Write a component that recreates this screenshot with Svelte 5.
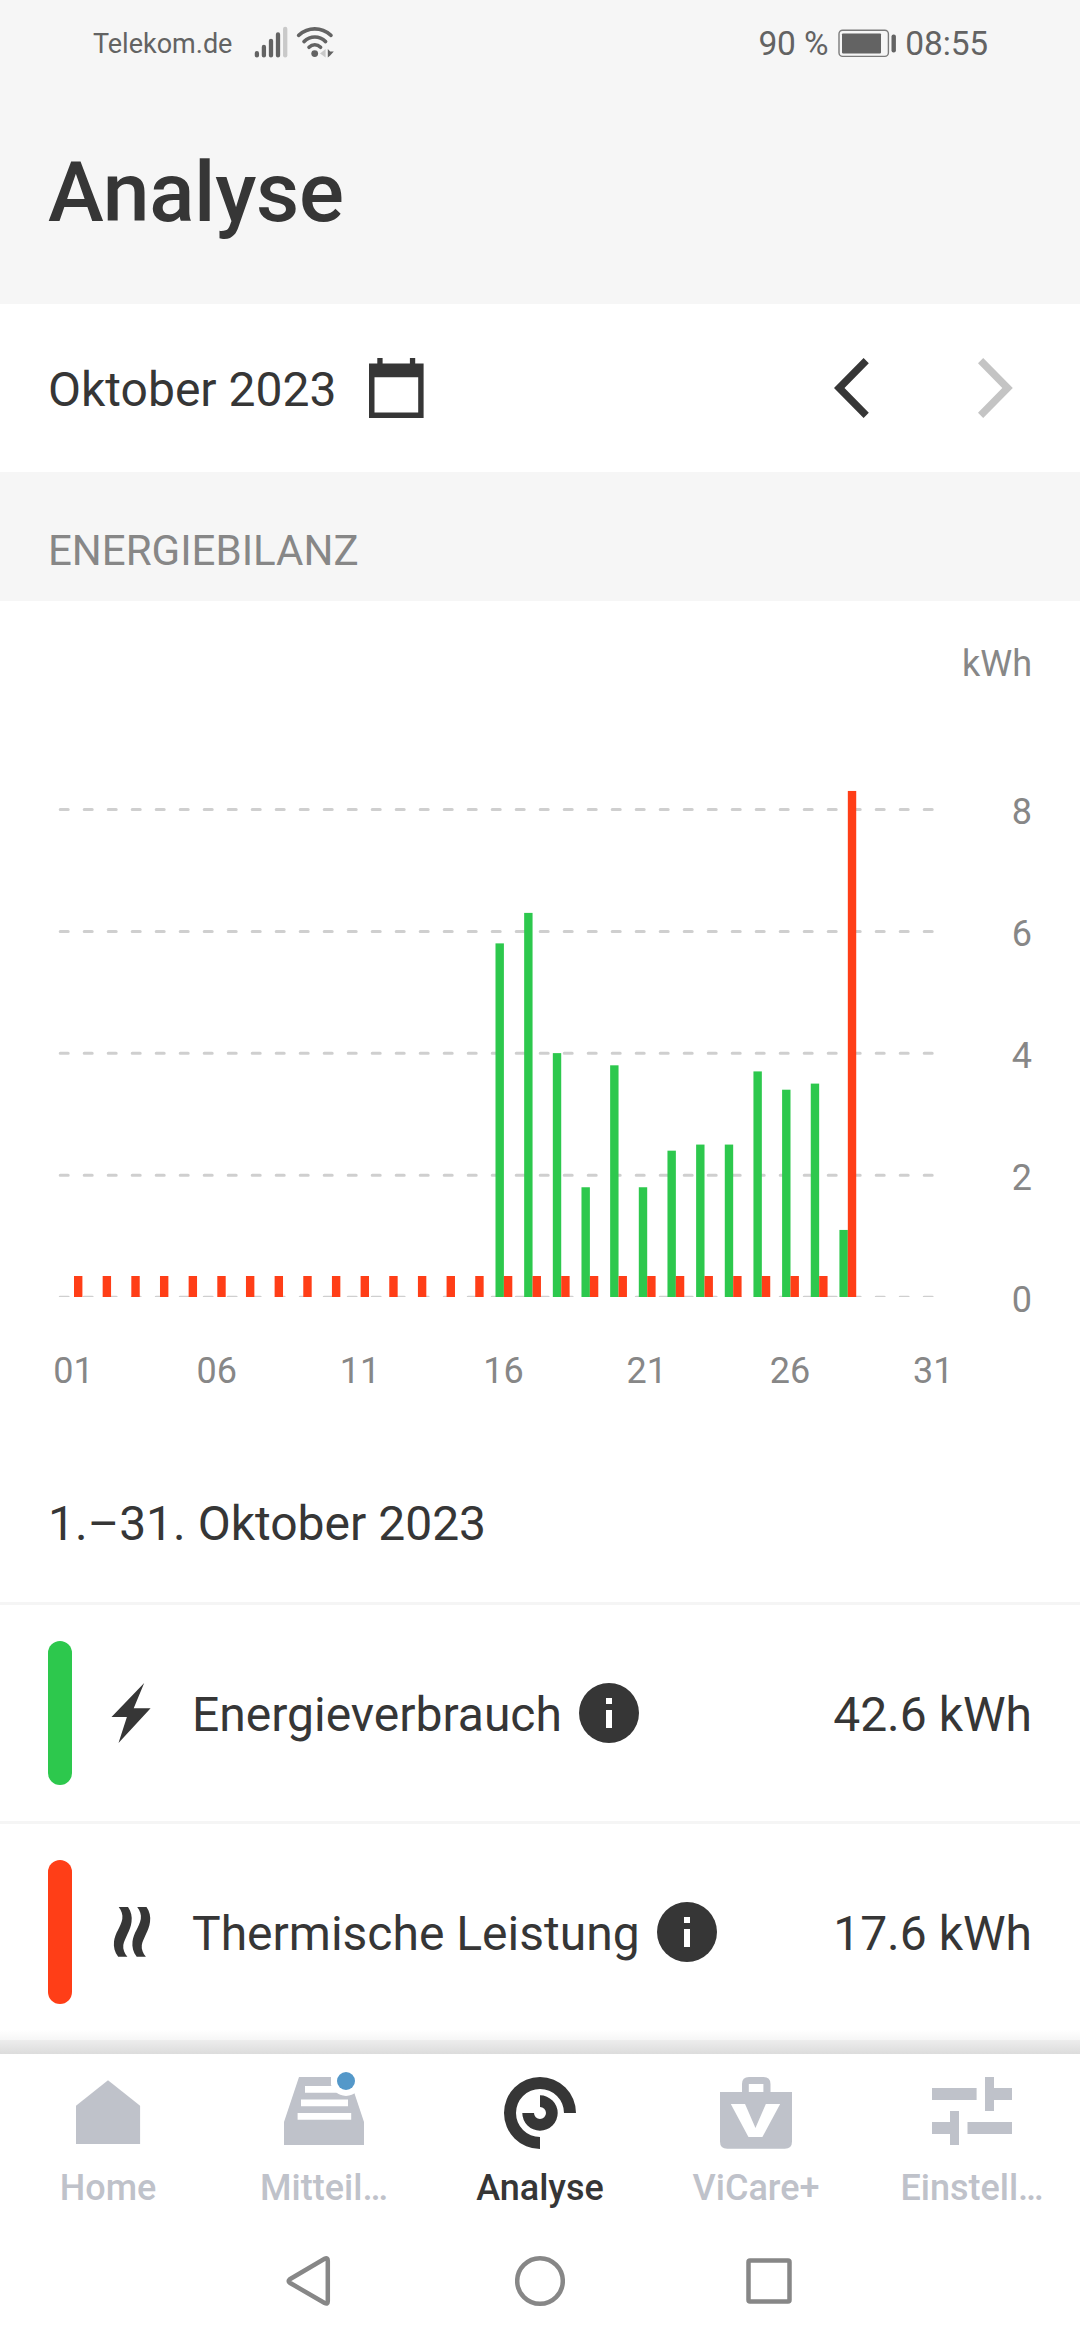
<script>
  const BASE = 696;
  const UNIT = 60.97;
  const FIRST = 74;
  const STEP = 28.66;
  const BAR = 8.4;

  const consumption = {
    16: 5.8, 17: 6.3, 18: 4.0, 19: 1.8, 20: 3.8, 21: 1.8, 22: 2.4,
    23: 2.5, 24: 2.5, 25: 3.7, 26: 3.4, 27: 3.5, 28: 1.1
  };

  const days = Array.from({ length: 28 }, (_, i) => ({
    x: FIRST + STEP * i,
    used: (consumption[i + 1] ?? 0) * UNIT,
    heat: i === 27 ? 8.3 * UNIT : 21
  }));

  const levels = [8, 6, 4, 2, 0];
  const ticks = ['01', '06', '11', '16', '21', '26', '31'];

  const rows = [
    { kind: 'power', label: 'Energieverbrauch', value: '42.6 kWh' },
    { kind: 'heat', label: 'Thermische Leistung', value: '17.6 kWh' }
  ];

  const tabs = [
    { id: 'home', label: 'Home' },
    { id: 'inbox', label: 'Mitteil…' },
    { id: 'analyse', label: 'Analyse' },
    { id: 'plus', label: 'ViCare+' },
    { id: 'settings', label: 'Einstell…' }
  ];
  let active = 'analyse';
</script>

<div class="screen">
  <header class="head">
    <div class="status">
      <span class="carrier">Telekom.de</span>
      <svg class="signal" width="34" height="34" viewBox="254 26 34 34">
        <g stroke="#636363" stroke-width="4.3" stroke-linecap="round">
          <path d="M256.9 53.2v2.2M263.9 47v8.4M271 40.8v14.6M278 34.4v21" />
          <path d="M285.2 28.8v26.6" stroke="#c9c9c9" />
        </g>
      </svg>
      <svg class="wifi" width="38" height="34" viewBox="296 26 38 34">
        <g fill="none" stroke="#636363" stroke-width="3.6" stroke-linecap="round">
          <path d="M298.6 35.3Q306 28.9 314.8 28.9T331 35.3" />
          <path d="M304 41.6Q308.8 37 314.8 37T325.6 41.6" />
          <path d="M309 47.3Q311.6 44.7 314.8 44.7T320.6 47.3" />
        </g>
        <circle cx="314.7" cy="53.6" r="3.4" fill="#636363" />
        <path d="M325.6 49v8.6L320 53.4Z" fill="#c9c9c9" />
        <path d="M327.8 49l2.4 2.6h3.6l-3.6 4-2.4 2Z" fill="#636363" />
      </svg>
      <span class="grow"></span>
      <span class="digits">90 %</span>
      <svg class="battery" width="60" height="30" viewBox="836 27 60 30">
        <rect x="838" y="29.2" width="49.4" height="26.2" rx="3.6" fill="none" stroke="#7b7b7b" stroke-width="1.4" />
        <rect x="841" y="32.4" width="39" height="20" rx="0.8" fill="#636363" />
        <rect x="890.5" y="33.6" width="4.4" height="17.8" rx="2" fill="#636363" />
      </svg>
      <span class="digits">08:55</span>
    </div>
    <h1>Analyse</h1>
  </header>

  <div class="datebar">
    <span class="month">Oktober 2023</span>
    <svg class="calendar" width="55" height="60" viewBox="0 0 55 60">
      <path fill-rule="evenodd" d="M0 5.4H8.3V0H13.6V5.4H40.9V0H46.2V5.4H54.6V60H0ZM5.5 19.2V54.4H49.2V19.2Z" fill="#363636" />
    </svg>
    <span class="grow"></span>
    <svg class="prev" width="35" height="60" viewBox="0 0 35 60">
      <path d="M29.6 0l5.2 5.2L10.5 30l24.3 24.8-5.2 5.2L0 30Z" fill="#363636" />
    </svg>
    <svg class="next" width="35" height="60" viewBox="0 0 35 60">
      <path d="M5.2 0L0 5.2 24.3 30 0 54.8 5.2 60 34.8 30Z" fill="#c4c4c4" />
    </svg>
  </div>

  <h2>ENERGIEBILANZ</h2>

  <svg class="chart" width="1080" height="844" viewBox="0 0 1080 844">
    <defs>
      <clipPath id="plot"><rect x="0" y="0" width="1080" height={BASE} /></clipPath>
    </defs>
    <g clip-path="url(#plot)">
      {#each levels as level}
        <line class="grid" x1="60.2" x2="933" y1={BASE + 0.2 - level * UNIT} y2={BASE + 0.2 - level * UNIT} />
      {/each}
    </g>
    {#each days as day}
      {#if day.used}
        <rect class="used" x={day.x - BAR} y={BASE - day.used} width={BAR} height={day.used} />
      {/if}
      <rect class="heat" x={day.x} y={BASE - day.heat} width={BAR} height={day.heat} />
    {/each}
    <text class="axis end" x="1032" y="75">kWh</text>
    {#each levels as level}
      <text class="axis end" x="1032" y={BASE + 15 - level * UNIT}>{level}</text>
    {/each}
    {#each ticks as tick, i}
      <text class="axis mid" x={FIRST - 0.5 + i * 5 * STEP} y="782">{tick}</text>
    {/each}
  </svg>

  <div class="period">1.–31. Oktober 2023</div>

  {#each rows as row}
    <div class="row">
      <span class="pill {row.kind}"></span>
      {#if row.kind === 'power'}
        <svg class="glyph" width="48" height="60" viewBox="108 0 48 60">
          <path d="M144.2 0L133.7 25.3H150.6L118.5 60 126.9 34H111.5Z" fill="#363636" />
        </svg>
      {:else}
        <svg class="glyph" width="48" height="60" viewBox="108 0 48 60">
          <g fill="#363636">
            <path d="M118.7 5H128C131.2 9.5 132.3 14.5 131.5 20C130.5 28.5 124.6 36 123.3 43C122.7 47.5 124.6 51.5 127.4 54.8H118.2C114.6 50 113.4 45 114 39.5C115 31 121 24.5 122.3 17C123 12.5 121.5 8.5 118.7 5Z" />
            <path d="M137.2 5H146.5C149.7 9.5 150.8 14.5 150 20C149 28.5 143.1 36 141.8 43C141.2 47.5 143.1 51.5 145.9 54.8H136.7C133.1 50 131.9 45 132.5 39.5C133.5 31 139.5 24.5 140.8 17C141.5 12.5 140 8.5 137.2 5Z" />
          </g>
        </svg>
      {/if}
      <span class="name">{row.label}</span>
      <svg class="info" width="60" height="60" viewBox="0 0 60 60">
        <circle cx="30" cy="30" r="30" fill="#363636" />
        <path d="M27 15h6v6h-6zM27 27h6v18h-6z" fill="#fff" />
      </svg>
      <span class="grow"></span>
      <span class="value">{row.value}</span>
    </div>
  {/each}

  <div class="shade"></div>
  <nav class="tabs">
    {#each tabs as tab}
      <div class="tab" class:active={tab.id === active}>
        <svg width="84" height="84" viewBox="0 0 84 84" fill="currentColor">
          {#if tab.id === 'home'}
            <path d="M42 12.3L74.1 37.8V76H10V37.8Z" />
          {:else if tab.id === 'inbox'}
            <path d="M17 9H67L82 54V77H2V54Z" />
            <path d="M23 18h40v6.8H23zM19 31.5h47v6.7H19zM15.6 45h53.6v6.7H15.600z" fill="#fff" />
            <path d="M49 8h32v5a17 15 0 0 1-32 4z" fill="#fff" />
            <circle cx="64" cy="13" r="15" fill="#fff" />
            <circle cx="64" cy="13" r="9" fill="#5498c9" />
          {:else if tab.id === 'analyse'}
            <path d="M78 45A36 36 0 1 0 42 81V69A24 24 0 1 1 66 45Z" />
            <path d="M42 27.3A17.7 17.7 0 1 1 24.3 45H36A6 6 0 1 0 42 39Z" />
          {:else if tab.id === 'plus'}
            <path fill-rule="evenodd" d="M6 24H28V16Q28 9 35 9H49.5Q56.5 9 56.5 16V24H78V73.5Q78 80.7 70.8 80.7H13.2Q6 80.7 6 73.5ZM34.8 16V24H49.4V16Z" />
            <text class="mark" x="17" y="69" textLength="49" lengthAdjust="spacingAndGlyphs">V</text>
          {:else}
            <path d="M2 20h44.6v12H2zM55 9h9v11h18v12H64v11h-9zM2 54h18V43h9v34h-9V66H2zM37.5 54H82v12H37.500z" />
          {/if}
        </svg>
        <span>{tab.label}</span>
      </div>
    {/each}
  </nav>

  <div class="system">
    <svg width="50" height="54" viewBox="284 2254 50 54">
      <path d="M289.8 2279.2L324.6 2258.8Q327.8 2257.2 327.8 2260.6V2301.4Q327.8 2304.6 324.6 2303L289.8 2282.8Q287.5 2281 289.8 2279.2Z" />
    </svg>
    <svg width="50" height="54" viewBox="515 2254 50 54">
      <circle cx="540" cy="2281" r="22.8" />
    </svg>
    <svg width="50" height="54" viewBox="746 2254 50 54">
      <rect x="748.5" y="2260.5" width="41" height="41" rx="1.5" />
    </svg>
  </div>
</div>

<style>
  :global(body) {
    margin: 0;
    background: #fff;
  }
  .screen {
    width: 1080px;
    height: 2340px;
    display: flex;
    flex-direction: column;
    overflow: hidden;
    background: #fff;
    color: #363636;
    font-family: Roboto, "Liberation Sans", sans-serif;
    font-size: 48px;
    white-space: nowrap;
  }
  svg {
    display: block;
    flex: none;
  }
  .grow {
    flex: 1;
  }
  .head {
    height: 304px;
    flex: none;
    background: #f6f6f6;
  }
  .status {
    height: 87px;
    display: flex;
    align-items: center;
    padding: 0 92px 0 93px;
    color: #636363;
  }
  .carrier {
    font-size: 27px;
    width: 161px;
  }
  .wifi {
    margin-left: 8px;
  }
  .signal,
  .wifi {
    margin-bottom: 1px;
  }
  .digits {
    font-size: 33.5px;
    letter-spacing: -0.15px;
  }
  .battery {
    margin: 0 8px 2px 9px;
  }
  h1 {
    margin: 0;
    padding-left: 48px;
    height: 212px;
    line-height: 212px;
    font-size: 84px;
    font-weight: 500;
    letter-spacing: -0.3px;
  }
  .datebar {
    height: 168px;
    flex: none;
    display: flex;
    align-items: center;
    padding: 0 67px 0 48px;
  }
  .month {
    padding-top: 3px;
  }
  .calendar {
    margin-left: 33px;
  }
  .prev {
    margin-right: 109px;
  }
  h2 {
    margin: 0;
    flex: none;
    height: 101px;
    padding: 28px 0 0 48px;
    line-height: 101px;
    font-size: 42px;
    font-weight: 400;
    color: #878787;
    background: #f6f6f6;
  }
  .grid {
    stroke: #cfcfcf;
    stroke-width: 3;
    stroke-linecap: round;
    stroke-dasharray: 8 16;
  }
  .used {
    fill: #2dc84d;
  }
  rect.heat {
    fill: #ff3e17;
  }
  .axis {
    font-size: 36px;
    fill: #878787;
  }
  .end {
    text-anchor: end;
  }
  .mid {
    text-anchor: middle;
  }
  .period {
    flex: none;
    height: 157px;
    line-height: 157px;
    padding-left: 48px;
  }
  .row {
    flex: none;
    height: 216px;
    border-top: 3px solid #f5f5f5;
    display: flex;
    align-items: center;
    padding: 0 48px;
  }
  .pill {
    width: 24px;
    height: 144px;
    border-radius: 12px;
  }
  .pill.power {
    background: #2dc84d;
  }
  .pill.heat {
    background: #ff3e17;
  }
  .glyph {
    margin: 0 36px;
  }
  .name,
  .value {
    padding-top: 3px;
  }
  .info {
    margin-left: 17px;
  }
  .shade {
    flex: none;
    height: 24px;
    margin-top: -10px;
    background: linear-gradient(#fff 0, #f6f6f6 10px, #ededed 10px, #dcdcdc 24px);
  }
  .tabs {
    flex: none;
    height: 169px;
    display: grid;
    grid-template-columns: repeat(5, 216px);
    background: #fff;
  }
  .tab {
    display: flex;
    flex-direction: column;
    align-items: center;
    padding-top: 14px;
    color: #bfc2ca;
    font-size: 36px;
    font-weight: 500;
  }
  .tab span {
    line-height: 42px;
    margin-top: 15px;
  }
  .active {
    color: #363636;
  }
  .mark {
    font-size: 46px;
    font-weight: 900;
    fill: #fff;
  }
  .system {
    flex: none;
    display: flex;
    justify-content: center;
    gap: 181px;
    padding-top: 31px;
  }
  .system svg {
    fill: none;
    stroke: #878787;
    stroke-width: 4.5;
  }
</style>
